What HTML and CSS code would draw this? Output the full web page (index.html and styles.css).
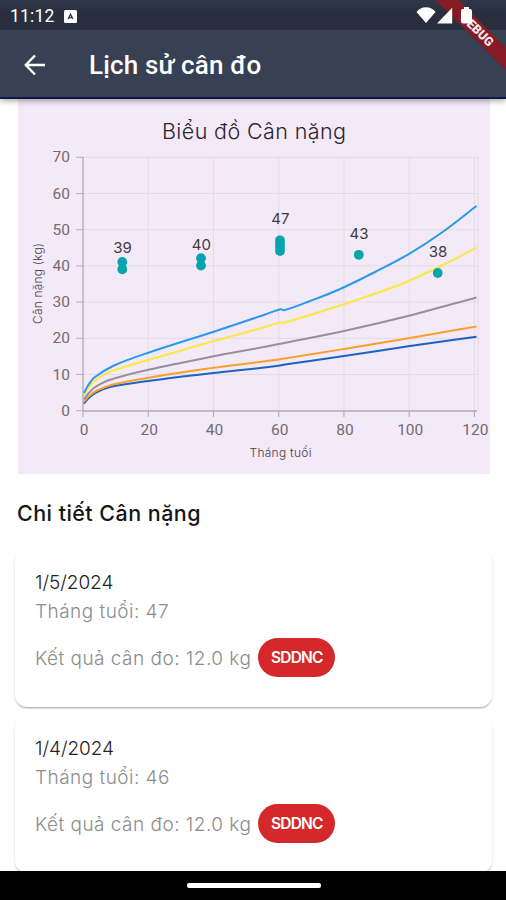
FILE: index.html
```html
<!DOCTYPE html>
<html lang="vi">
<head>
<meta charset="utf-8">
<title>Lịch sử cân đo</title>
<link rel="stylesheet" href="styles.css">
</head>
<body>
<div class="screen">
  <header class="header">
    <div class="status">
      <span class="time">11:12</span>
      <svg class="keyboard" viewBox="0 0 13 13"><rect width="13" height="13" rx="1.5" fill="#fff"/><path d="M4.2 9 6.5 4.2 8.8 9M5.2 7.6h2.6" fill="none" stroke="#2b3242" stroke-width="1.3"/></svg>
      <svg class="signals" viewBox="0 0 58 20"><path d="M.5 6Q4 1.300 10 1.300T19.500 6L10 17Z" fill="#fff"/><path d="M21 17.500 36.200 1.800v15.700Z" fill="#fff"/><path d="M45 5q0-2 2-2h1V1h5v2h1q2 0 2 2V15.500q0 2-2 2h-7q-2 0-2-2Z" fill="#fff"/></svg>
    </div>
    <div class="toolbar">
      <svg class="back" viewBox="0 0 22 22"><path d="M21 11H2M11 1.500 1.800 11 11 20.500" fill="none" stroke="#fff" stroke-width="2.400"/></svg>
      <h1 class="title">Lịch sử cân đo</h1>
    </div>
    <div class="debug">DEBUG</div>
  </header>

  <main class="content">
    <svg class="chart" viewBox="18 99 472 375">
      <text class="chart-title" x="254" y="138.500" textLength="184">Biểu đồ Cân nặng</text>
      <g id="grid"></g>
      <g id="curves"></g>
      <g id="marks"></g>
      <text class="axis-title" x="280.500" y="457" textLength="62">Tháng tuổi</text>
      <text class="axis-title" transform="translate(42 283.500) rotate(-90)" textLength="81">Cân nặng (kg)</text>
    </svg>
    <h2 class="section">Chi tiết Cân nặng</h2>
    <article class="card">
      <div class="date">1/5/2024</div>
      <div class="age">Tháng tuổi: 47</div>
      <div class="result"><span>Kết quả cân đo: 12.0 kg</span><span class="badge">SDDNC</span></div>
    </article>
    <article class="card">
      <div class="date">1/4/2024</div>
      <div class="age">Tháng tuổi: 46</div>
      <div class="result"><span>Kết quả cân đo: 12.0 kg</span><span class="badge">SDDNC</span></div>
    </article>
  </main>
  <footer class="navbar"><div class="pill"></div></footer>
</div>
<script src="chart.js"></script>
</body>
</html>
```
FILE: styles.css
```css
* { box-sizing: border-box; }
body { margin: 0; background: #fff; font-family: Inter, "Noto Sans", sans-serif; }
.screen { width: 506px; height: 900px; display: flex; flex-direction: column; overflow: hidden; }

.header { position: relative; z-index: 1; flex: none; height: 99px; background: #384054; border-bottom: 2px solid #10164a; box-shadow: 0 2px 6px rgba(0,0,0,.35); clip-path: inset(0 0 -8px 0); }
.status { display: flex; align-items: center; height: 30px; padding: 2px 32px 0 10px; background: linear-gradient(#303748, #292f3f 40%, #292f3f); color: #fff; }
.time { width: 54px; font: 400 17.5px/20px Roboto, sans-serif; letter-spacing: .2px; }
.keyboard { width: 13px; height: 13px; }
.signals { position: relative; z-index: 2; width: 58px; height: 20px; margin: -1px 0 0 auto; }
.toolbar { display: flex; align-items: center; height: 69px; padding-left: 24px; }
.back { width: 22px; height: 22px; }
.title { margin: 1px 0 0 43px; font: 500 26px/32px Roboto, sans-serif; letter-spacing: .15px; color: #fff; white-space: nowrap; }
.debug { position: absolute; left: 420px; top: 24px; width: 118px; height: 16px; padding-right: 5px; background: #841b25; color: #f5e8ea; font: 900 12.5px/16px Roboto, sans-serif; text-align: center; transform: rotate(45deg); }

.content { flex: 1; min-height: 0; overflow: hidden; display: flex; flex-direction: column; padding: 0 14px 0 15px; }
.chart { flex: none; display: block; width: 472px; height: 375px; margin-left: 3px; background: #f4e9f7; }
.chart text { font-family: Inter, sans-serif; text-anchor: middle; fill: #716b74; }
.chart .chart-title { font-size: 21.500px; font-weight: 300; fill: #29252c; }
.chart .axis-title { font-size: 12px; font-weight: 300; fill: #433e46; }
.chart .tick { font-family: Roboto, sans-serif; font-size: 15.500px; }
.chart .y { text-anchor: end; }
.chart .mark { font-size: 15px; font-weight: 400; fill: #413b44; }

.section { margin: 24px 0 22px 2px; font-size: 21.500px; line-height: 30px; font-weight: 500; color: #161616; letter-spacing: .45px; }
.card { flex: none; height: 157px; margin-bottom: 9px; padding: 21px 20px 19px; border-radius: 12px; background: #fff; box-shadow: 0 2px 2px -1px rgba(0,0,0,.32), 0 1px 3px rgba(0,0,0,.09); font-size: 19px; font-weight: 300; white-space: nowrap; }
.date { line-height: 24px; color: #222; letter-spacing: -.05px; }
.age { margin-top: 5px; line-height: 24px; color: #8c8c8c; letter-spacing: .47px; }
.result { display: flex; align-items: center; height: 39px; margin-top: 14px; padding-top: 1px; color: #8c8c8c; letter-spacing: .48px; }
.badge { width: 77px; height: 39px; margin: -1px 0 0 7px; border-radius: 20px; background: #d4282a; color: #fff; font: 600 15.5px/39px Inter, sans-serif; text-align: center; letter-spacing: -.8px; }

.navbar { flex: none; height: 29px; display: flex; justify-content: center; padding: 12px 0 0 1px; background: #000; }
.pill { width: 134px; height: 5px; border-radius: 2px; background: #fff; }
```
FILE: chart.js
```js
const add = (parent, tag, attrs, text) => {
  const el = document.createElementNS('http://www.w3.org/2000/svg', tag);
  for (const k in attrs) el.setAttribute(k, attrs[k]);
  if (text !== undefined) el.textContent = text;
  document.getElementById(parent).appendChild(el);
};
const px = v => 83 + v * 3.262;
const py = v => 410.7 - v * 3.62;

for (let v = 0; v <= 70; v += 10) {
  if (v) add('grid', 'path', { d: `M83 ${py(v)}H478`, stroke: '#e3dae7' });
  add('grid', 'path', { d: `M76 ${py(v)}H83`, stroke: '#b9b1bd' });
  add('grid', 'text', { class: 'tick y', x: 70, y: py(v) + 5 }, v);
}
for (let v = 0; v <= 120; v += 20) {
  if (v) add('grid', 'path', { d: `M${px(v)} 157V410`, stroke: '#e3dae7' });
  add('grid', 'path', { d: `M${px(v)} 411v6`, stroke: '#aaa3ae' });
  add('grid', 'text', { class: 'tick', x: px(v) + 1, y: 435 }, v);
}
add('grid', 'path', { d: 'M478 157V410', stroke: '#e3dae7' });
add('grid', 'path', { d: 'M83 157V411H477', stroke: '#b0a9b4', fill: 'none', 'stroke-width': 1.3 });

const curves = [
  ['#1964c0', [[84,403.5],[88,398.7],[96,392.5],[110,387],[148.3,381],[213.7,373],[260,368],[280,365.5],[285,364.5],[344,356],[410,346],[476.5,336.7]]],
  ['#fb9f2c', [[84,402],[88,397],[96,391],[113,384.5],[148.3,377.7],[213.7,367.8],[260,362],[280,359.3],[344,349],[410,338],[476.5,326.5]]],
  ['#969098', [[84,399.5],[88,394],[94,388],[108,380.5],[148.3,369.8],[213.7,356.3],[260,347.8],[279,344],[344,331],[410,315.5],[476.5,297.5]]],
  ['#fbe942', [[84,395],[88,388.5],[94,381.5],[108,372.5],[148.3,360],[213.7,341],[260,328.5],[280.5,322.5],[284,322.8],[344,304.3],[388,289],[410,280.5],[443,265],[476.5,247.7]]],
  ['#269bec', [[84,393],[88,385.5],[94,377.7],[113,366],[148.3,352.7],[213.7,331.7],[260,316.3],[280.5,309.2],[284,310.3],[310,301],[338,290],[376,271.5],[410,253.3],[443,231.7],[476.5,206]]]
];
for (const [stroke, p] of curves) {
  const m = p.map((q, i) => {
    const a = p[Math.max(i - 1, 0)], b = p[Math.min(i + 1, p.length - 1)];
    return (b[1] - a[1]) / (b[0] - a[0]);
  });
  let d = `M${p[0]}`;
  for (let i = 1; i < p.length; i++) {
    const h = (p[i][0] - p[i - 1][0]) / 3;
    d += `C${p[i-1][0] + h} ${p[i-1][1] + m[i-1] * h} ${p[i][0] - h} ${p[i][1] - m[i] * h} ${p[i]}`;
  }
  add('curves', 'path', { d, stroke, fill: 'none', 'stroke-width': 2 });
}

const marks = [
  [122.3, [262, 269.3], 39, 253],
  [201, [258.2, 265.5], 40, 249.7],
  [280, [240.3, 244, 247.5, 251], 47, 224],
  [358.8, [254.8], 43, 239],
  [437.7, [273], 38, 257]
];
for (const [x, ys, label, ty] of marks) {
  for (const y of ys) add('marks', 'circle', { cx: x, cy: y, r: 4.9, fill: '#06a5ae' });
  add('marks', 'text', { class: 'mark', x: x + 0.3, y: ty }, label);
}
```
